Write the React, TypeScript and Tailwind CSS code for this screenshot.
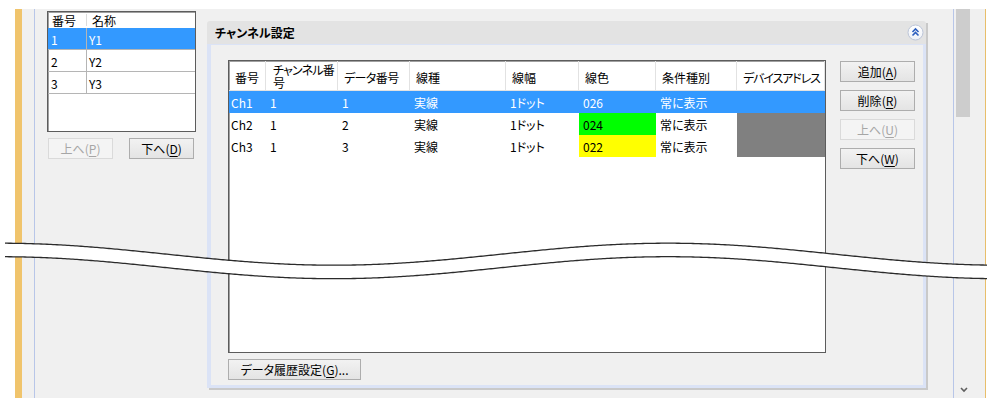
import React from "react";

const FONT =
  "[font-family:'Noto_Sans_CJK_JP','Noto_Sans',sans-serif] [font-feature-settings:'palt']";

function Mn({ t, k, after = "" }: { t: string; k: string; after?: string }) {
  return (
    <span className="whitespace-nowrap">
      {t}(<span className="underline underline-offset-[2px]">{k}</span>){after}
    </span>
  );
}

function Btn({
  children,
  disabled = false,
  className = "",
}: {
  children: React.ReactNode;
  disabled?: boolean;
  className?: string;
}) {
  return (
    <div
      className={`h-[21px] flex items-center justify-center border text-[12px] leading-none ${
        disabled
          ? "border-[#dadada] bg-[#f4f4f4] text-[#a6a6a6]"
          : "border-[#adadad] bg-linear-to-b from-[#f2f2f2] to-[#e4e4e4] text-black"
      } ${className}`}
    >
      {children}
    </div>
  );
}

const cols = [
  "w-[37px]",
  "w-[72px]",
  "w-[72px]",
  "w-[96px]",
  "w-[73px]",
  "w-[77px]",
  "w-[81px]",
  "w-[88px]",
];

const headers = ["番号", "チャンネル番号", "データ番号", "線種", "線幅", "線色", "条件種別", "デバイスアドレス"];

const rows = [
  { cells: ["Ch1", "1", "1", "実線", "1ドット", "026", "常に表示", ""], sel: true, color: "", dev: false },
  { cells: ["Ch2", "1", "2", "実線", "1ドット", "024", "常に表示", ""], sel: false, color: "bg-[#00ff00]", dev: true },
  { cells: ["Ch3", "1", "3", "実線", "1ドット", "022", "常に表示", ""], sel: false, color: "bg-[#ffff00]", dev: true },
];

function Wave() {
  const f = (x: number) => 254.2 - 11 * Math.cos((2 * Math.PI * x) / 668);
  const xs: number[] = [];
  for (let x = 5; x <= 992; x += 2) xs.push(x);
  const top = xs.map((x) => [x, f(x)] as const);
  const bot = xs.map((x) => [x, f(x) + 13.5] as const);
  const line = (p: readonly (readonly [number, number])[]) =>
    "M" + p.map(([x, y]) => `${x.toFixed(1)},${y.toFixed(2)}`).join(" L");
  const fill =
    line(top) +
    " L" +
    [...bot].reverse().map(([x, y]) => `${x.toFixed(1)},${y.toFixed(2)}`).join(" L") +
    " Z";
  return (
    <svg className="absolute left-0 top-0 pointer-events-none" width="987" height="398" viewBox="0 0 987 398">
      <path d={fill} fill="#ffffff" />
      <path d={line(top)} fill="none" stroke="#2b2b2b" strokeWidth="1.3" />
      <path d={line(bot)} fill="none" stroke="#2b2b2b" strokeWidth="1.3" />
    </svg>
  );
}

function LeftList() {
  const items = [
    ["1", "Y1"],
    ["2", "Y2"],
    ["3", "Y3"],
  ];
  return (
    <div className="w-[149px] flex flex-col">
      <div className="h-[121px] border border-[#5c5c5c] bg-white shadow-[inset_1px_1px_0_#a0a0a0] flex flex-col">
        <div className="h-[16px] flex items-center text-[12px] leading-none">
          <div className="w-[39px] pl-[4px] pt-[1px]">番号</div>
          <div className="w-px h-[12px] bg-[#dcdcdc] -ml-[1px]" />
          <div className="pl-[5px] pt-[1px]">名称</div>
        </div>
        {items.map(([n, name], i) => (
          <div
            key={n}
            className={`h-[22px] flex border-b border-[#b5b5b5] text-[12px] leading-none ${
              i === 0 ? "bg-[#3399ff] text-white" : "text-black"
            }`}
          >
            <div className="w-[39px] border-r border-[#b5b5b5] pl-[3px] flex items-center pt-[2px]">{n}</div>
            <div className="pl-[2px] flex items-center pt-[2px]">{name}</div>
          </div>
        ))}
      </div>
      <div className="flex mt-[6px] ml-[1px] gap-[16px]">
        <Btn disabled className="w-[65px]">
          <Mn t="上へ" k="P" />
        </Btn>
        <Btn className="w-[65px]">
          <Mn t="下へ" k="D" />
        </Btn>
      </div>
    </div>
  );
}

function Grid() {
  return (
    <div className="w-[598px] h-[293px] border border-[#5c5c5c] bg-white shadow-[inset_1px_1px_0_#a0a0a0] flex flex-col">
      <div className="h-[30px] flex border-b border-[#e2e2e2] text-[12px]">
        {headers.map((h, i) => (
          <div
            key={h}
            className={`${cols[i]} shrink-0 border-r border-[#e2e2e2] flex items-center whitespace-nowrap overflow-hidden ${
              i === 1 ? "pl-[7px] tracking-[-0.8px]" : "leading-none pt-[4px] pl-[6px]"
            } ${i === 2 ? "tracking-[-0.6px]" : ""} ${i === 7 ? "tracking-[-1.1px]" : ""}`}
          >
            {i === 1 ? (
              <div className="flex flex-col">
                <span className="block leading-[13px] h-[13px]">チャンネル番</span>
                <span className="block leading-[13px] h-[13px]">号</span>
              </div>
            ) : (
              h
            )}
          </div>
        ))}
      </div>
      {rows.map((r) => (
        <div
          key={r.cells[0]}
          className={`h-[22px] flex text-[12px] leading-none ${r.sel ? "bg-[#3399ff] text-white" : "text-black"}`}
        >
          {r.cells.map((c, i) => (
            <div
              key={i}
              className={`${cols[i]} shrink-0 flex items-center pt-[1px] whitespace-nowrap ${
                i === 0 ? "pl-[2px]" : "pl-[4px]"
              } ${i === 5 ? r.color : ""} ${i === 7 && r.dev ? "bg-[#808080]" : ""}`}
            >
              {c}
            </div>
          ))}
        </div>
      ))}
    </div>
  );
}

function CollapseIcon() {
  return (
    <svg width="17" height="17" viewBox="0 0 17 17">
      <defs>
        <linearGradient id="cg" x1="0" y1="0" x2="0" y2="1">
          <stop offset="0" stopColor="#ffffff" />
          <stop offset="1" stopColor="#eef1f7" />
        </linearGradient>
      </defs>
      <circle cx="8.5" cy="8.5" r="7.5" fill="url(#cg)" stroke="#bcc5d8" strokeWidth="1" />
      <path d="M5.5 8 L8.5 5 L11.5 8" fill="none" stroke="#2d5fbe" strokeWidth="1.6" />
      <path d="M5.5 11.5 L8.5 8.5 L11.5 11.5" fill="none" stroke="#2d5fbe" strokeWidth="1.6" />
    </svg>
  );
}

function Panel() {
  return (
    <div className="w-[719px] h-[367px] flex flex-col shadow-[2px_2px_0_#c9c9c9]">
      <div className="h-[23px] bg-[#e3e3e3] rounded-t-[3px] flex items-center justify-between pl-[8px] pr-[2px]">
        <span className="text-[12px] font-bold leading-none text-black pt-[1px]">チャンネル設定</span>
        <CollapseIcon />
      </div>
      <div className="flex-1 border-t border-l-[4px] border-r-[3px] border-b-[3px] border-[#dbe3f6] bg-[#f0f0f0] pl-[17px] pt-[15px] flex">
        <div className="flex flex-col">
          <Grid />
          <Btn className="w-[133px] mt-[6px]">
            <Mn t="データ履歴設定" k="G" after="..." />
          </Btn>
        </div>
        <div className="ml-[14px] mt-[1px] flex flex-col gap-[8px]">
          <Btn className="w-[75px]">
            <Mn t="追加" k="A" />
          </Btn>
          <Btn className="w-[75px]">
            <Mn t="削除" k="R" />
          </Btn>
          <Btn disabled className="w-[75px]">
            <Mn t="上へ" k="U" />
          </Btn>
          <Btn className="w-[75px]">
            <Mn t="下へ" k="W" />
          </Btn>
        </div>
      </div>
    </div>
  );
}

export default function App() {
  return (
    <div className={`w-[987px] h-[398px] bg-white relative overflow-hidden flex flex-col ${FONT}`}>
      <div className="h-[9px] shrink-0" />
      <div className="flex flex-1">
        <div className="w-[15px] bg-white" />
        <div className="w-[7px] bg-[#f0c46c]" />
        <div className="flex-1 flex bg-[#f0f0f0]">
          <div className="w-[12px]" />
          <div className="w-px bg-[#b8c6e8]" />
          <div className="w-[918px] flex items-start pl-[12px] pt-[2px]">
            <LeftList />
            <div className="ml-[11px] mt-[10px]">
              <Panel />
            </div>
          </div>
          <div className="w-px bg-[#b8c6e8]" />
          <div className="flex-1 flex flex-col justify-between">
            <div className="ml-[2px] w-[14px] h-[108px] bg-[#cdcdcd]" />
            <svg className="ml-[6px] mb-[5px]" width="8" height="6" viewBox="0 0 8 6">
              <path d="M1 1 L4 4 L7 1" fill="none" stroke="#5f5f5f" strokeWidth="1.6" />
            </svg>
          </div>
        </div>
        <div className="w-px bg-[#e8be6a]" />
        <div className="w-px bg-white" />
      </div>
      <Wave />
    </div>
  );
}
